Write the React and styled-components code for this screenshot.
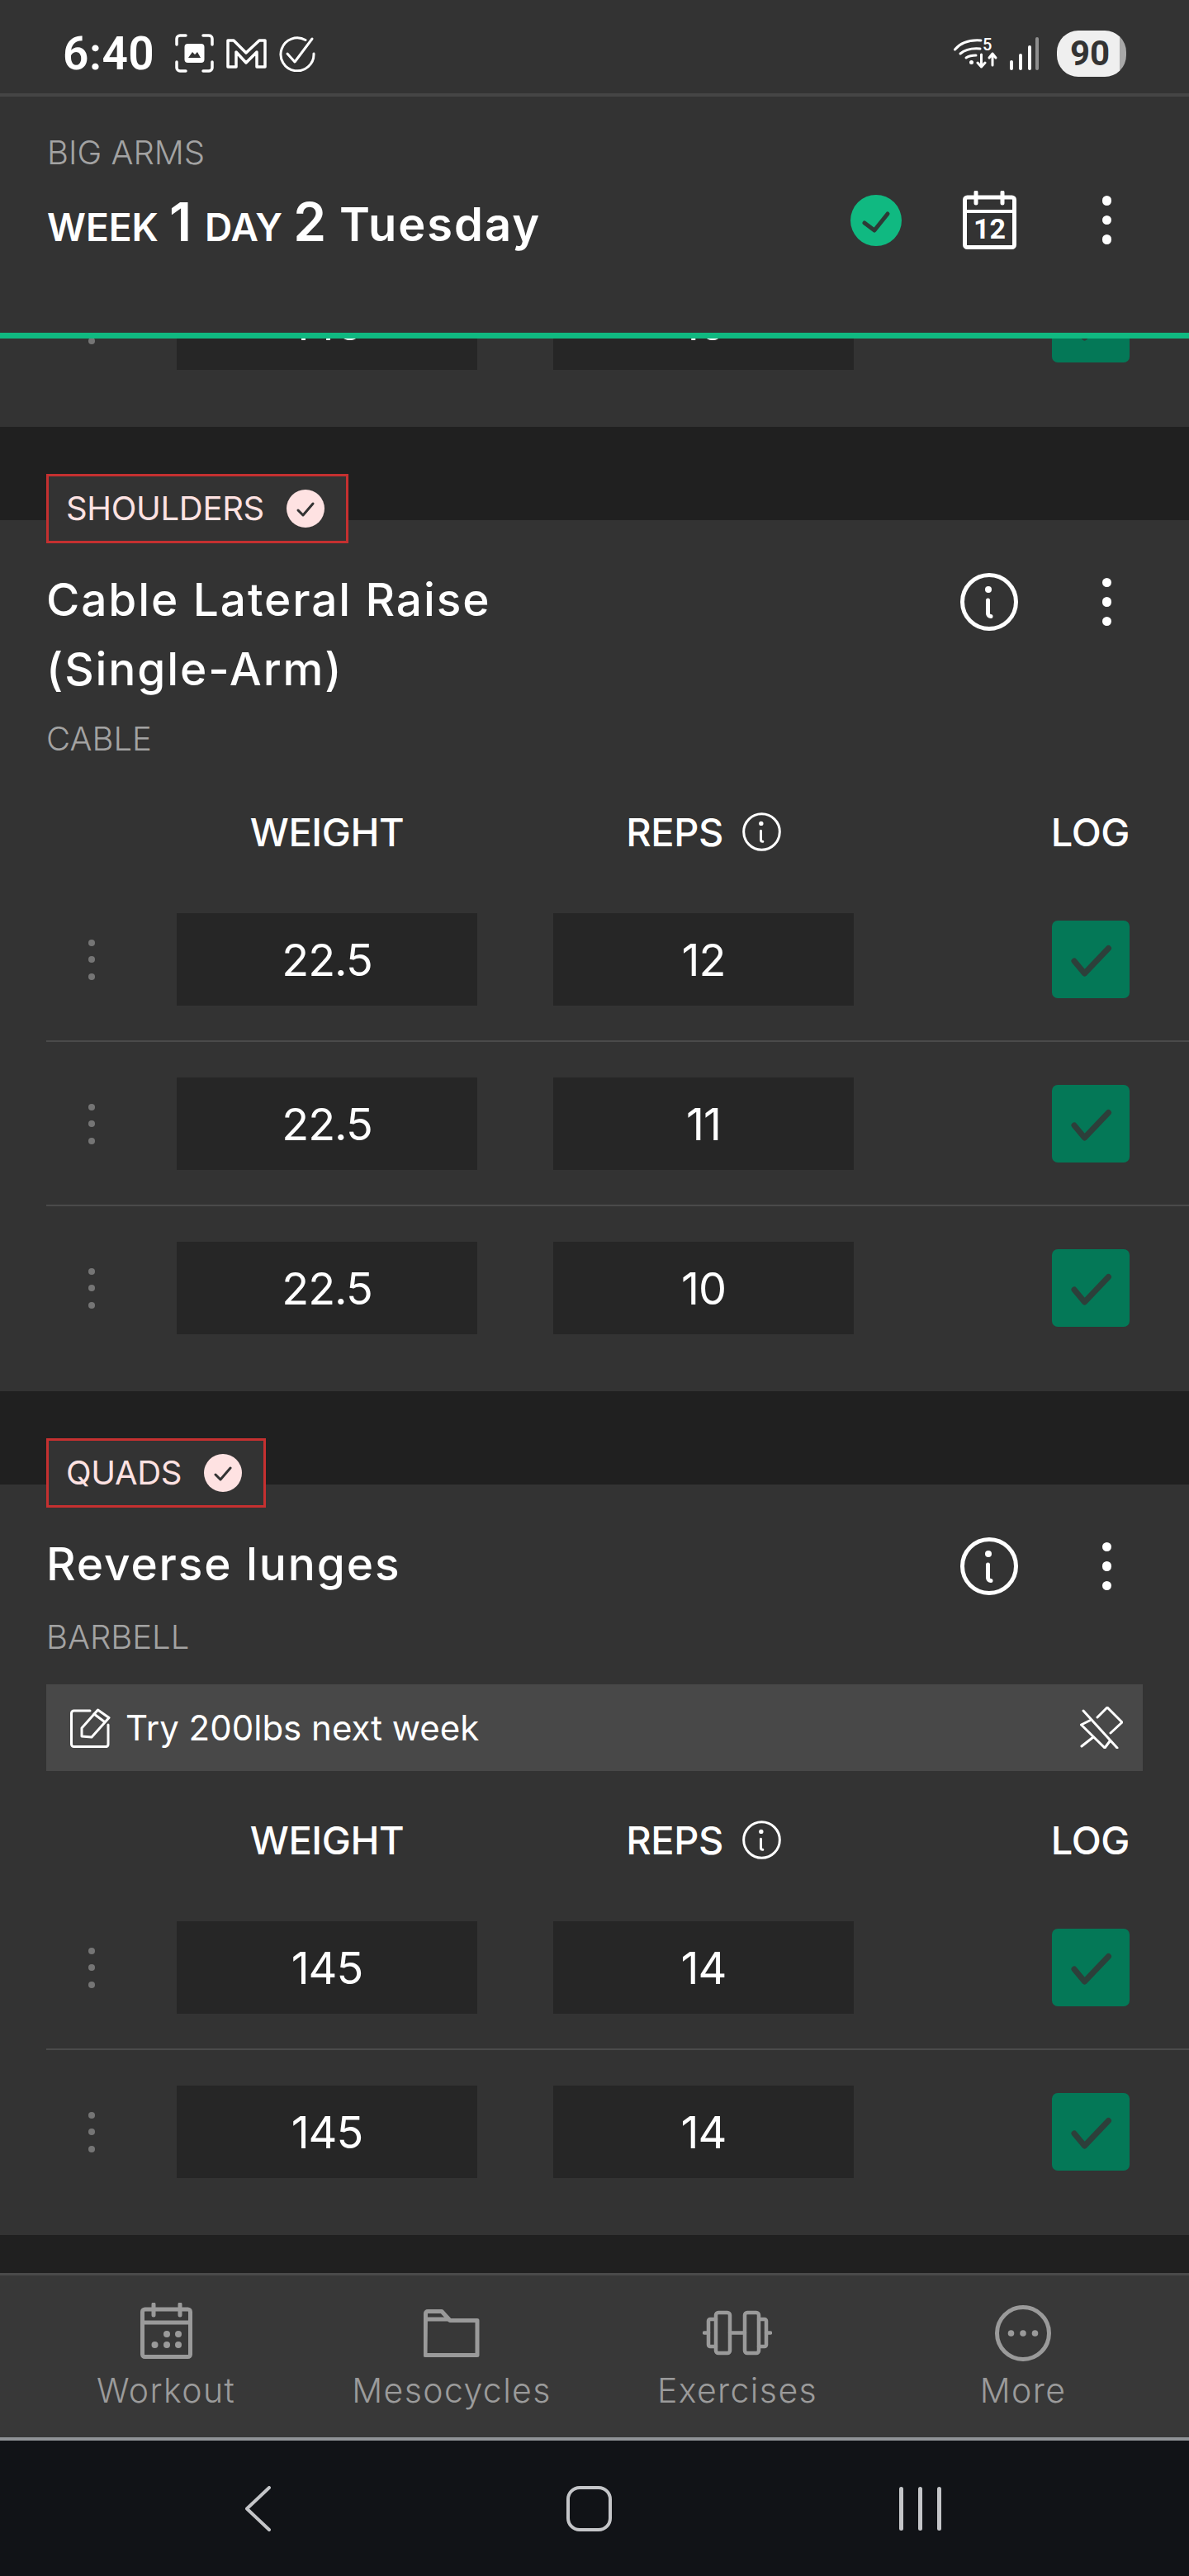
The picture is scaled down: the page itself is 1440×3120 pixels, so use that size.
import styled, { createGlobalStyle } from "styled-components";

const GlobalStyle = createGlobalStyle`
  html, body {
    margin: 0;
    padding: 0;
    background: #202020;
  }
  * {
    box-sizing: border-box;
  }
`;

const FONT = `Inter, "Open Sans", "Liberation Sans", sans-serif`;

const Screen = styled.div`
  width: 1440px;
  height: 3120px;
  display: flex;
  flex-direction: column;
  overflow: hidden;
  font-family: ${FONT};
  color: #fff;
  background: #202020;
`;

const StatusBar = styled.div`
  height: 117px;
  flex-shrink: 0;
  display: flex;
  align-items: center;
  padding: 16px 76px 0 76px;
  background: #333;
  border-bottom: 4px solid #454545;
`;

const Clock = styled.span`
  font-family: Roboto, sans-serif;
  font-size: 55px;
  font-weight: 600;
  line-height: 60px;
  letter-spacing: 0.5px;
  margin-right: 25px;
`;

const StatusLeft = styled.div`
  display: flex;
  align-items: center;
  gap: 15px;
`;

const StatusRight = styled.div`
  margin-left: auto;
  display: flex;
  align-items: center;
  gap: 13px;
`;

const Battery = styled.div`
  width: 84px;
  height: 56px;
  border-radius: 26px;
  margin-left: 8px;
  display: flex;
  align-items: center;
  padding-left: 16px;
  background: linear-gradient(90deg, #efefef 91%, #a8a8a8 91%);
  color: #333;
  font-family: Roboto, sans-serif;
  font-size: 42px;
  font-weight: 700;
`;

const Header = styled.header`
  flex-shrink: 0;
  height: 293px;
  display: flex;
  align-items: flex-start;
  justify-content: space-between;
  padding: 43px 94px 0 57px;
  background: #333;
  border-bottom: 7px solid #10b981;
`;

const Program = styled.div`
  font-size: 40px;
  font-weight: 300;
  line-height: 50px;
  color: #a3a3a3;
`;

const WorkoutTitle = styled.h1`
  margin: 18px 0 0;
  font-size: 56px;
  font-weight: 600;
  line-height: 82px;
  letter-spacing: 2px;
  white-space: nowrap;
`;

const TitleWord = styled.span`
  font-size: 46px;
  letter-spacing: 0;
`;

const TitleNumber = styled.span`
  font-size: 64px;
  letter-spacing: 0;
  margin: 0 16px 0 13px;
`;

const HeaderActions = styled.div`
  display: flex;
  align-items: center;
  margin-top: 71px;
`;

const DoneBadge = styled.svg`
  width: 62px;
  height: 62px;
  margin-right: 74px;
`;

const MenuDots = styled.div`
  display: flex;
  flex-direction: column;
  gap: 12px;
  margin-left: ${(p) => p.$offset}px;

  i {
    display: block;
    width: 11.5px;
    height: 11.5px;
    border-radius: 50%;
    background: #fff;
  }
`;

const List = styled.main`
  flex: 1;
  min-height: 0;
  overflow: hidden;
`;

const ListInner = styled.div`
  margin-top: -117px;
`;

const Card = styled.section`
  background: #333;
  padding: 0 0 25px 56px;
  margin-top: ${(p) => p.$gap}px;
`;

const MuscleTag = styled.div`
  display: inline-flex;
  align-items: center;
  height: 84px;
  margin-top: -56px;
  padding: 0 26px 0 21px;
  gap: 27px;
  background: #333;
  border: 3px solid #c53030;
  color: #fee2e2;
  font-size: 40px;
  letter-spacing: -0.3px;
  line-height: 1;
  vertical-align: top;
`;

const TagCheck = styled.svg`
  width: 46px;
  height: 46px;
`;

const TitleRow = styled.div`
  display: flex;
  align-items: flex-start;
  justify-content: space-between;
  padding-right: 94px;
  margin-top: 26px;
`;

const ExerciseName = styled.h2`
  margin: 0;
  font-size: 55px;
  font-weight: 500;
  letter-spacing: 1.9px;
  line-height: 84px;
  max-width: 640px;
`;

const ExerciseActions = styled.div`
  display: flex;
  align-items: center;
  margin-top: 10px;
`;

const Equipment = styled.div`
  margin-top: ${(p) => p.$gap}px;
  font-size: 40px;
  font-weight: 300;
  line-height: 50px;
  color: #a3a3a3;
`;

const NoteBar = styled.div`
  display: flex;
  align-items: center;
  height: 105px;
  margin: 32px 56px 0 0;
  padding: 0 24px 0 29px;
  background: #484848;
`;

const NoteText = styled.span`
  margin-left: 18px;
  font-size: 42px;
  font-weight: 400;
  flex: 1;
`;

const LogHead = styled.div`
  display: grid;
  grid-template-columns: 66px 364px 364px 1fr;
  column-gap: 92px;
  align-items: center;
  height: 50px;
  padding-right: 72px;
  margin-top: ${(p) => p.$gap}px;
  margin-bottom: 34px;
  font-size: 47px;
  font-weight: 500;
  letter-spacing: -0.4px;
`;

const HeadCell = styled.div`
  grid-column: ${(p) => p.$col};
  display: flex;
  align-items: center;
  justify-content: ${(p) => p.$align || "center"};
  gap: 23px;
`;

const SetRow = styled.div`
  display: grid;
  grid-template-columns: 66px 364px 364px 1fr;
  column-gap: 92px;
  align-items: center;
  height: 199px;
  padding: 43px 72px ${(p) => (p.$last ? "44px" : "42px")} 0;
  border-bottom: ${(p) => (p.$last ? "0" : "2px solid #4a4a4a")};
`;

const DragDots = styled.div`
  display: flex;
  flex-direction: column;
  gap: 12.5px;
  margin-left: 51px;

  i {
    display: block;
    width: 8px;
    height: 8px;
    border-radius: 50%;
    background: #757575;
  }
`;

const ValueBox = styled.div`
  height: 112px;
  display: flex;
  align-items: center;
  justify-content: center;
  background: #262626;
  font-size: 54px;
  font-weight: 400;
  letter-spacing: -1px;
`;

const LogButton = styled.div`
  justify-self: end;
  width: 94px;
  height: 94px;
  border-radius: 7px;
  background: #047857;
  display: flex;
`;

const TabBar = styled.nav`
  flex-shrink: 0;
  height: 203px;
  display: grid;
  grid-template-columns: repeat(4, 346px);
  padding: 33px 28px 0;
  background: #383838;
  border-top: 3px solid #4a4a4a;
  border-bottom: 4px solid #8f9296;
`;

const Tab = styled.div`
  display: flex;
  flex-direction: column;
  align-items: center;
  color: #9b9b9b;
  font-size: 41px;
  font-weight: 300;
  letter-spacing: 1.4px;
  line-height: 50px;

  svg {
    height: 72px;
    margin-bottom: 9px;
  }
`;

const SystemNav = styled.div`
  flex-shrink: 0;
  height: 164px;
  display: grid;
  grid-template-columns: repeat(3, 401px);
  justify-items: center;
  align-items: center;
  padding-left: 112px;
  background: #111317;
`;

const HomeKey = styled.div`
  width: 55px;
  height: 55px;
  border: 4px solid #c4c5c8;
  border-radius: 16px;
`;

const RecentKey = styled.div`
  display: flex;
  gap: 18px;

  i {
    display: block;
    width: 5px;
    height: 53px;
    border-radius: 3px;
    background: #c4c5c8;
  }
`;

function Dots() {
  return (
    <>
      <i />
      <i />
      <i />
    </>
  );
}

function InfoIcon({ size = 70, stroke = 5 }) {
  return (
    <svg width={size} height={size} viewBox="0 0 70 70" fill="none" stroke="#fff">
      <circle cx="35" cy="35" r="32.5" strokeWidth={stroke * (70 / size)} />
      <circle cx="34" cy="20" r="4" fill="#fff" stroke="none" />
      <path
        d="M33.5 33v16c0 2 1.5 3.5 3.5 3.5"
        strokeWidth={stroke * (70 / size)}
        strokeLinecap="round"
      />
    </svg>
  );
}

function CheckTag({ name }) {
  return (
    <MuscleTag>
      {name}
      <TagCheck viewBox="0 0 46 46">
        <circle cx="23" cy="23" r="23" fill="#fee2e2" />
        <path
          d="M14 25l6 6 12-14"
          fill="none"
          stroke="#333"
          strokeWidth="3"
          strokeLinecap="round"
          strokeLinejoin="round"
        />
      </TagCheck>
    </MuscleTag>
  );
}

function SetLine({ weight, reps, last }) {
  return (
    <SetRow $last={last}>
      <DragDots>
        <Dots />
      </DragDots>
      <ValueBox>{weight}</ValueBox>
      <ValueBox>{reps}</ValueBox>
      <LogButton>
        <svg width="94" height="94" viewBox="0 0 94 94" fill="none">
          <path
            d="M27 49l12.5 15 29-30.5"
            stroke="#2d3f3a"
            strokeWidth="7"
            strokeLinecap="round"
            strokeLinejoin="round"
          />
        </svg>
      </LogButton>
    </SetRow>
  );
}

function Exercise({ muscle, name, equipment, note, sets, gap }) {
  return (
    <Card $gap={gap}>
      <CheckTag name={muscle} />
      <TitleRow>
        <ExerciseName>{name}</ExerciseName>
        <ExerciseActions>
          <InfoIcon />
          <MenuDots $offset={102}>
            <Dots />
          </MenuDots>
        </ExerciseActions>
      </TitleRow>
      <Equipment $gap={note ? 22 : 18}>{equipment}</Equipment>
      {note && (
        <NoteBar>
          <svg width="49" height="48" viewBox="0 0 49 48" fill="none" stroke="#fff" strokeWidth="3" strokeLinecap="round" strokeLinejoin="round">
            <path d="M24 3H4.5a3 3 0 0 0-3 3v37.5a3 3 0 0 0 3 3H44a3 3 0 0 0 2-3V20" />
            <path d="M14 34V24L33.5 2 47 11.5 26 35z" />
            <path d="M29 7l12 9" />
          </svg>
          <NoteText>{note}</NoteText>
          <svg width="52" height="51" viewBox="0 0 52 51" fill="none" stroke="#fff" strokeWidth="3" strokeLinecap="round" strokeLinejoin="round">
            <path d="M4 5l41 45" />
            <path d="M21 13L33 1l18 18-14 13" />
            <path d="M11.5 17L1.5 22 30 50l6-8" />
            <path d="M16 37L2 48" />
          </svg>
        </NoteBar>
      )}
      <LogHead $gap={note ? 55 : 59}>
        <HeadCell $col={2}>WEIGHT</HeadCell>
        <HeadCell $col={3}>
          REPS
          <InfoIcon size={47} stroke={3} />
        </HeadCell>
        <HeadCell $col={4} $align="flex-end">
          LOG
        </HeadCell>
      </LogHead>
      {sets.map((s, i) => (
        <SetLine key={i} weight={s[0]} reps={s[1]} last={i === sets.length - 1} />
      ))}
    </Card>
  );
}

export default function App() {
  return (
    <>
      <GlobalStyle />
      <Screen>
        <StatusBar>
          <Clock>6:40</Clock>
          <StatusLeft>
            <svg width="47" height="47" viewBox="0 0 47 47" fill="none" stroke="#fff" strokeWidth="3.5" strokeLinecap="round">
              <path d="M2 13V6a4 4 0 0 1 4-4h7M34 2h7a4 4 0 0 1 4 4v7M45 34v7a4 4 0 0 1-4 4h-7M13 45H6a4 4 0 0 1-4-4v-7" />
              <rect x="11.5" y="12" width="24" height="23" rx="4" fill="#fff" stroke="none" />
              <path d="M16 29l5-7 3 3 3-3 4 7z" fill="#333" stroke="none" />
            </svg>
            <svg width="49" height="37" viewBox="0 0 49 37" fill="none" stroke="#fff" strokeWidth="3.5" strokeLinejoin="round">
              <path d="M2 3h7l15 15L40 3h7v32H37V17L24 30 12 17v18H2z" />
            </svg>
            <svg width="45" height="44" viewBox="0 0 45 44" fill="none" stroke="#fff" strokeWidth="3" strokeLinecap="round" strokeLinejoin="round">
              <path d="M32 5.5A20 20 0 1 0 42 22" />
              <path d="M10 22l9 10 21-28" />
            </svg>
          </StatusLeft>
          <StatusRight>
            <svg width="54" height="37" viewBox="0 0 54 37" fill="none" stroke="#fff" strokeWidth="3" strokeLinecap="round" strokeLinejoin="round">
              <path d="M1.5 14C9 5 20 2 33 3" />
              <path d="M8 19c6-5 13-7 24-6" />
              <path d="M15 24c3-2 7-3 12-3" />
              <circle cx="21.5" cy="29.5" r="2.5" fill="#fff" stroke="none" />
              <path d="M33.5 20v15M29 30l4.5 5 4.5-5" />
              <path d="M47 33V19M43 24l4-5 4 5" />
              <text x="35" y="15" fill="#fff" stroke="none" fontSize="20" fontFamily="Roboto, sans-serif" fontWeight="500">
                5
              </text>
            </svg>
            <svg width="37" height="40" viewBox="0 0 37 40" fill="none" strokeWidth="4" strokeLinecap="round">
              <path d="M3 38v-8M14 38V22M25 38V12" stroke="#fff" />
              <path d="M34 38V2" stroke="#8f8f8f" />
            </svg>
            <Battery>90</Battery>
          </StatusRight>
        </StatusBar>
        <Header>
          <div>
            <Program>BIG ARMS</Program>
            <WorkoutTitle>
              <TitleWord>WEEK</TitleWord>
              <TitleNumber>1</TitleNumber>
              <TitleWord>DAY</TitleWord>
              <TitleNumber>2</TitleNumber>
              Tuesday
            </WorkoutTitle>
          </div>
          <HeaderActions>
            <DoneBadge viewBox="0 0 62 62">
              <circle cx="31" cy="31" r="31" fill="#10b981" />
              <path d="M17 34l12 9 16-20" fill="none" stroke="#2d3a36" strokeWidth="5" strokeLinecap="round" strokeLinejoin="round" />
            </DoneBadge>
            <svg width="65" height="71" viewBox="0 0 65 71" fill="none" stroke="#fff">
              <rect x="2.5" y="8" width="60" height="60.5" rx="3" strokeWidth="5" />
              <path d="M2.5 25h60" strokeWidth="4" />
              <path d="M16 2v13M48 2v13" strokeWidth="5" strokeLinecap="round" />
              <text x="32.5" y="58" textAnchor="middle" fill="#fff" stroke="none" fontSize="34" fontWeight="700" fontFamily="Roboto, sans-serif">
                12
              </text>
            </svg>
            <MenuDots $offset={104}>
              <Dots />
            </MenuDots>
          </HeaderActions>
        </Header>
        <List>
          <ListInner>
            <Card $gap={0}>
              <SetLine weight="145" reps="10" last />
            </Card>
            <Exercise
              gap={113}
              muscle="SHOULDERS"
              name="Cable Lateral Raise (Single-Arm)"
              equipment="CABLE"
              sets={[
                ["22.5", "12"],
                ["22.5", "11"],
                ["22.5", "10"],
              ]}
            />
            <Exercise
              gap={113}
              muscle="QUADS"
              name="Reverse lunges"
              equipment="BARBELL"
              note="Try 200lbs next week"
              sets={[
                ["145", "14"],
                ["145", "14"],
              ]}
            />
          </ListInner>
        </List>
        <TabBar>
          <Tab>
            <svg width="63" viewBox="0 0 63 72" fill="none" stroke="#9a9a9a" strokeWidth="5">
              <rect x="2.5" y="8" width="58" height="57.5" rx="3" />
              <path d="M2.5 24h58" />
              <path d="M16 2v13M48 2v13" strokeLinecap="round" />
              <g fill="#9a9a9a" stroke="none">
                <circle cx="32" cy="38" r="4" />
                <circle cx="46" cy="38" r="4" />
                <circle cx="17.5" cy="51" r="4" />
                <circle cx="32" cy="51" r="4" />
                <circle cx="46" cy="51" r="4" />
              </g>
            </svg>
            Workout
          </Tab>
          <Tab>
            <svg width="68" viewBox="0 -8 68 72" fill="none" stroke="#9a9a9a" strokeWidth="5" strokeLinejoin="round">
              <path d="M2.5 5a2.5 2.5 0 0 1 2.5-2.5h17l10 11h33v42h-63z" />
              <path d="M2.5 12h28" />
            </svg>
            Mesocycles
          </Tab>
          <Tab>
            <svg width="84" viewBox="0 -10 84 72" fill="none" stroke="#9a9a9a" strokeWidth="4.5" strokeLinejoin="round" strokeLinecap="round">
              <rect x="16" y="2" width="17" height="49" rx="3" />
              <rect x="51" y="2" width="17" height="49" rx="3" />
              <path d="M16 10H9a2 2 0 0 0-2 2v29a2 2 0 0 0 2 2h7M68 10h7a2 2 0 0 1 2 2v29a2 2 0 0 1-2 2h-7" />
              <path d="M33 26.5h18M2 26.5h5M77 26.5h5" />
            </svg>
            Exercises
          </Tab>
          <Tab>
            <svg width="68" viewBox="0 -3 68 72" fill="none" stroke="#9a9a9a" strokeWidth="5">
              <circle cx="34" cy="34" r="31.5" />
              <g fill="#9a9a9a" stroke="none">
                <circle cx="19.5" cy="34" r="3.8" />
                <circle cx="34" cy="34" r="3.8" />
                <circle cx="48.5" cy="34" r="3.8" />
              </g>
            </svg>
            More
          </Tab>
        </TabBar>
        <SystemNav>
          <svg width="31" height="55" viewBox="0 0 31 55" fill="none" stroke="#c4c5c8" strokeWidth="4" strokeLinecap="round" strokeLinejoin="round">
            <path d="M29 2L2 27.5 29 53" />
          </svg>
          <HomeKey />
          <RecentKey>
            <i />
            <i />
            <i />
          </RecentKey>
        </SystemNav>
      </Screen>
    </>
  );
}
